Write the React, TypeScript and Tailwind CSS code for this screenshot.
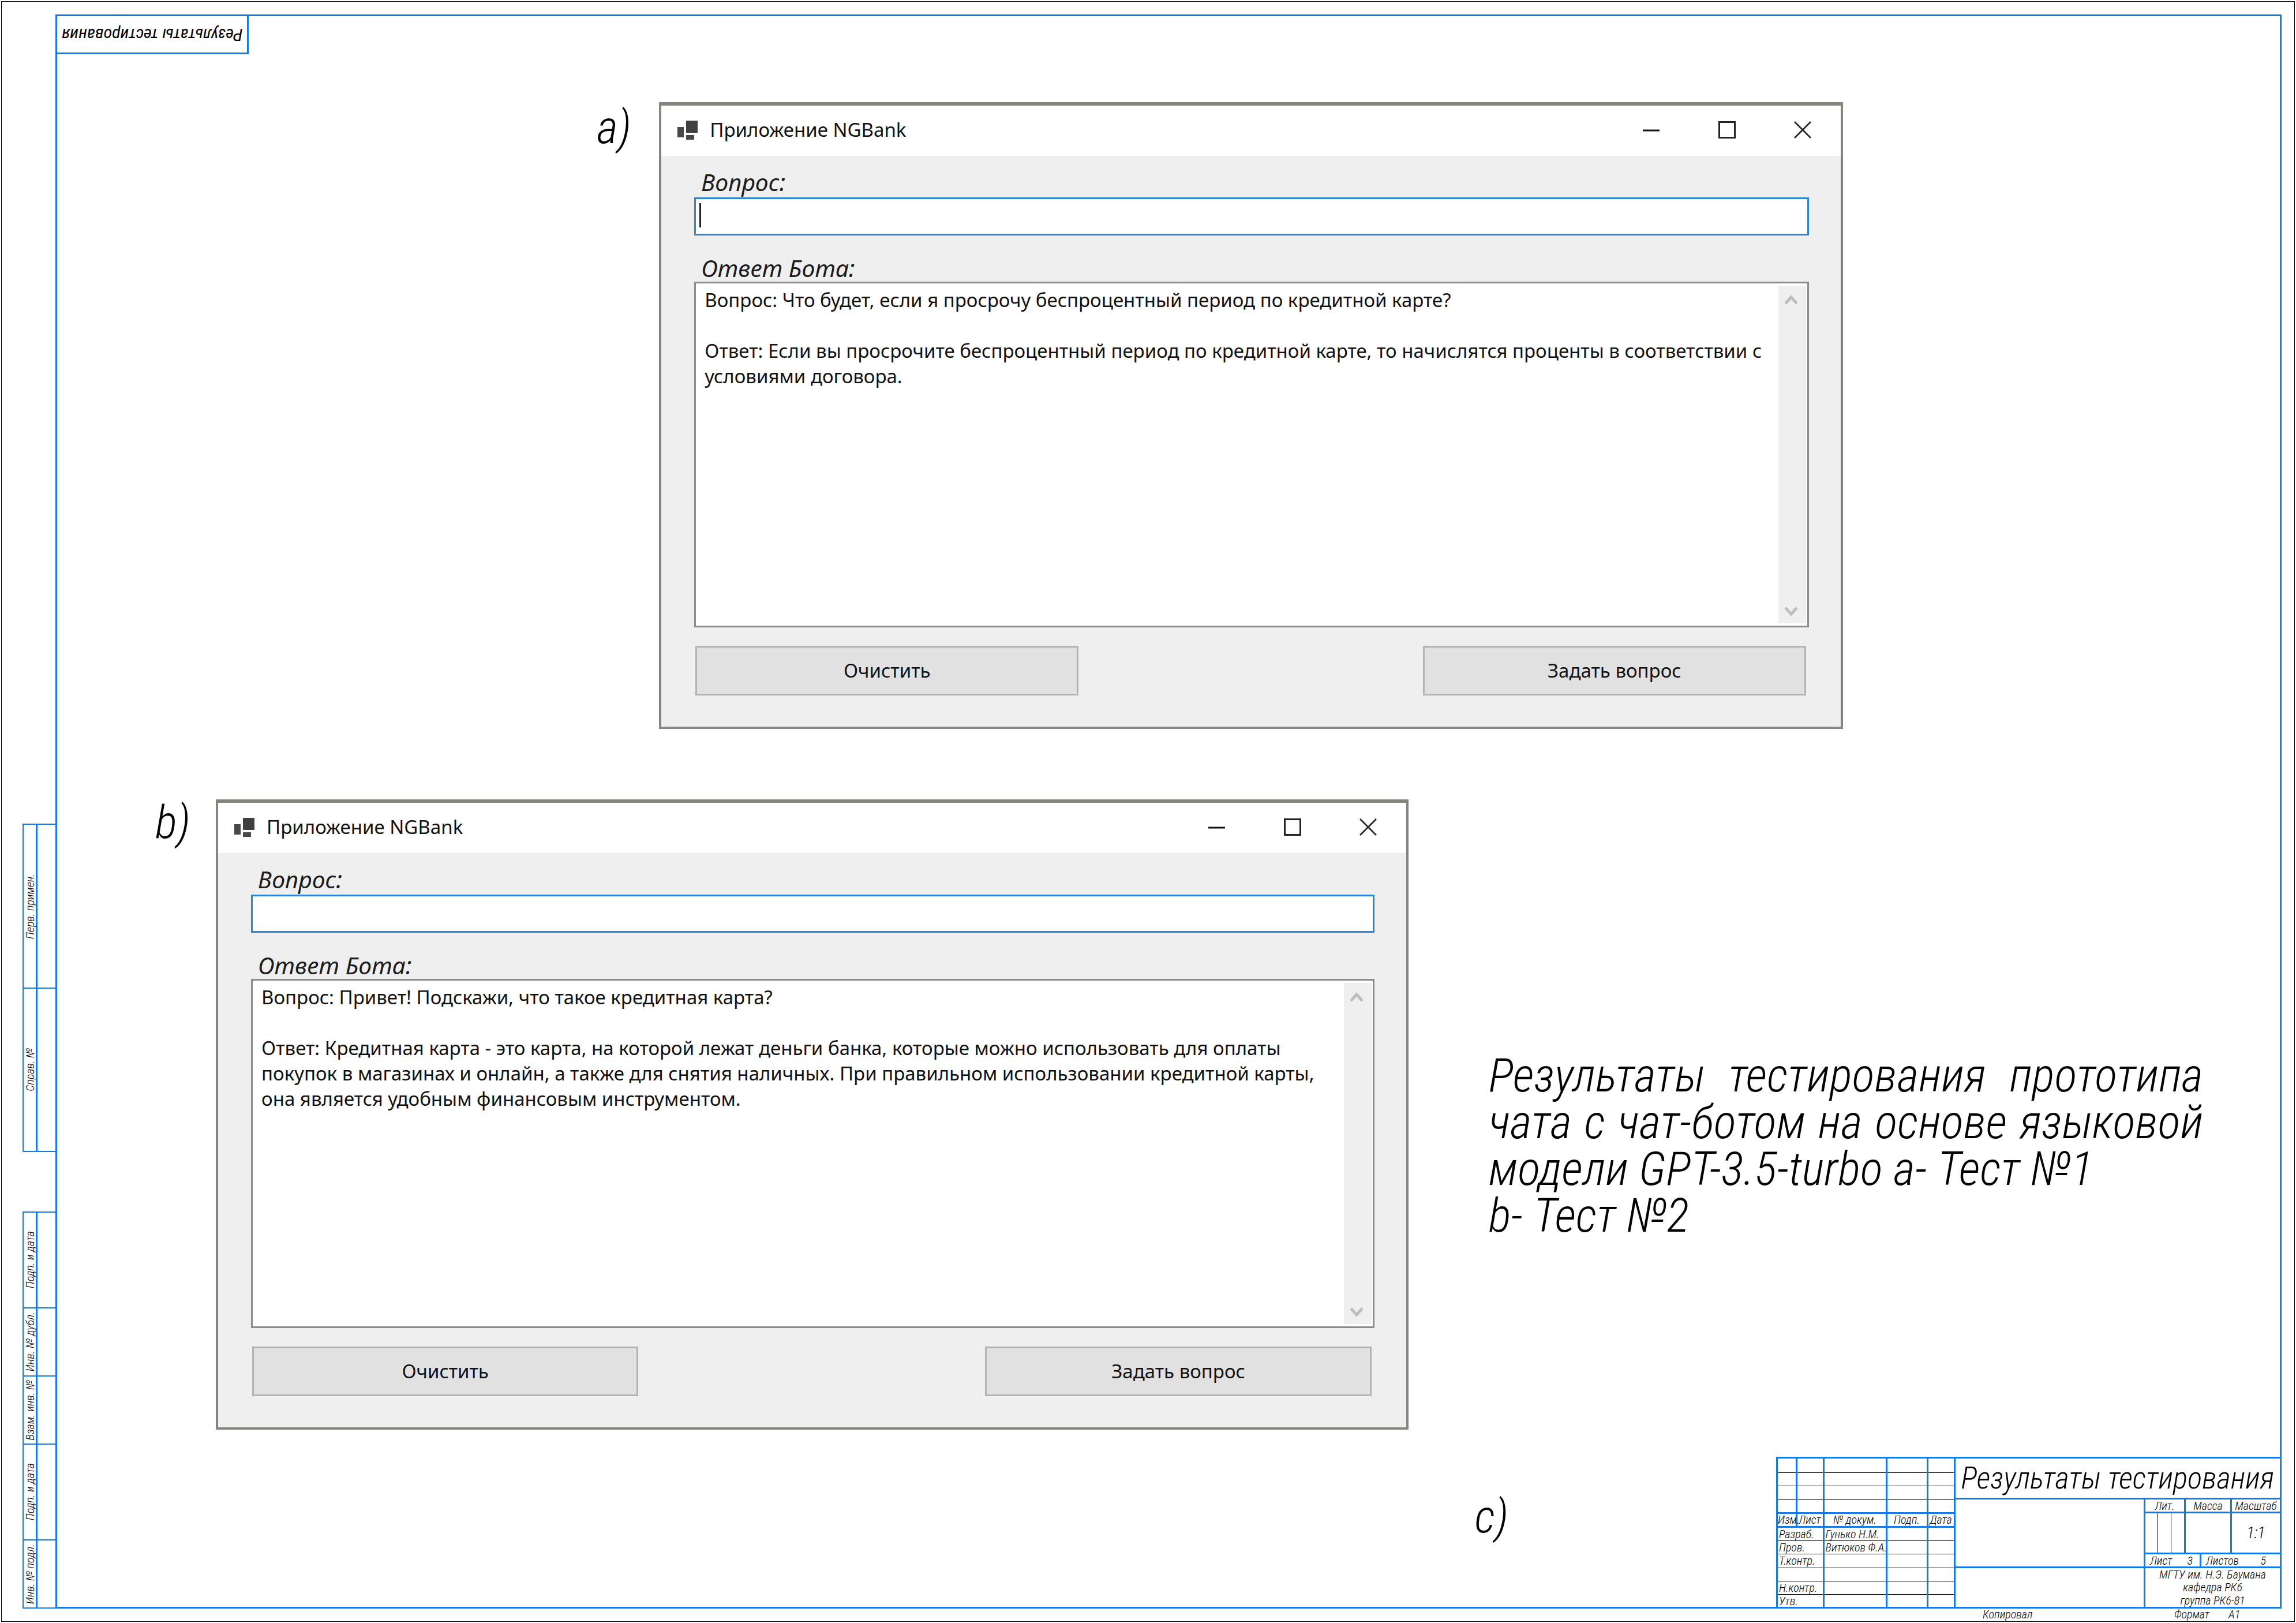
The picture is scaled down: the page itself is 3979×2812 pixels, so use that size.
import { useId } from "react";

type WindowProps = {
  text: string;
  boxClass: string;
  caret?: boolean;
};

const BLUE = "border-[#137be6]";

function AppIcon() {
  return (
    <svg viewBox="0 0 35 33" className="h-[33px] w-[35px]" aria-hidden="true">
      <rect x="0" y="11" width="11" height="18" fill="#484848" />
      <rect x="15" y="0" width="20" height="21" fill="#404040" />
      <rect x="15" y="25" width="14" height="8" fill="#484848" />
    </svg>
  );
}

function WindowControls() {
  const btn = "flex h-full w-[131px] items-center justify-center";
  return (
    <div className="flex h-full">
      <button type="button" aria-label="Свернуть" className={btn}>
        <svg viewBox="0 0 30 30" className="size-[30px]" stroke="#111" strokeWidth="3">
          <path d="M0 16H29" />
        </svg>
      </button>
      <button type="button" aria-label="Развернуть" className={btn}>
        <svg viewBox="0 0 30 30" className="size-[30px]" fill="none" stroke="#222" strokeWidth="3">
          <rect x="1.5" y="1.5" width="27" height="27" />
        </svg>
      </button>
      <button type="button" aria-label="Закрыть" className={btn}>
        <svg viewBox="0 0 30 30" className="size-[30px]" stroke="#222" strokeWidth="2.6">
          <path d="M1 1L29 29M29 1L1 29" />
        </svg>
      </button>
    </div>
  );
}

function ScrollBar() {
  return (
    <div className="my-1 mr-[2px] flex w-[48px] shrink-0 flex-col items-center justify-between bg-[#efefef] pt-4 pr-1 pb-3">
      <svg viewBox="0 0 22 18" className="h-[18px] w-[22px]" fill="none" stroke="#bdbdbd" strokeWidth="5">
        <path d="M1 15L11 4L21 15" />
      </svg>
      <svg viewBox="0 0 22 18" className="h-[18px] w-[22px]" fill="none" stroke="#bdbdbd" strokeWidth="5">
        <path d="M1 3L11 14L21 3" />
      </svg>
    </div>
  );
}

function BankWindow({ text, boxClass, caret }: WindowProps) {
  const id = useId();
  const label = "ml-3 block text-[41px] leading-[48px] text-[#1c1c1c] italic";
  const button =
    "h-[86px] w-[34.5%] border-[3px] border-[#b3b3b3] bg-[#e1e1e1] text-[33px] leading-[44px] text-[#111]";
  return (
    <section className="border-4 border-t-[6px] border-[#85847d] bg-[#efefef] font-['Noto_Sans',sans-serif]">
      <header className="flex h-[87px] items-center bg-white pb-[3px] pl-7">
        <AppIcon />
        <h2 className="ml-[21px] flex-1 text-[33px] leading-[44px] text-[#111]">Приложение NGBank</h2>
        <WindowControls />
      </header>
      <div className="pr-[55px] pb-[54px] pl-[57px]">
        <label htmlFor={`${id}-q`} className={`${label} pt-[21px]`}>
          Вопрос:
        </label>
        <div className="relative mt-[3px]">
          <input
            id={`${id}-q`}
            type="text"
            className="block h-[66px] w-full border-[3px] border-[#2d84d0] bg-white px-3 text-[33px] outline-none"
          />
          {caret && <span className="absolute top-[10px] left-[9px] h-[42px] w-[3px] bg-[#222]" />}
        </div>
        <label htmlFor={`${id}-a`} className={`${label} mt-8`}>
          Ответ Бота:
        </label>
        <div className={`flex border-[3px] border-[#8c8c8c] bg-white ${boxClass}`}>
          <textarea
            id={`${id}-a`}
            readOnly
            value={text}
            className="block flex-1 resize-none overflow-hidden bg-white px-[15px] pt-[7px] text-[33px] leading-[44px] text-[#111] outline-none"
          />
          <ScrollBar />
        </div>
        <div className="mt-8 mr-[5px] ml-[2px] flex justify-between">
          <button type="button" className={button}>
            Очистить
          </button>
          <button type="button" className={button}>
            Задать вопрос
          </button>
        </div>
      </div>
    </section>
  );
}

function StripGroup({ cells }: { cells: { label: string; size: string }[] }) {
  return (
    <div className={`border-t-2 border-l-2 ${BLUE}`}>
      {cells.map((c, i) => (
        <div key={i} className={`flex border-b-2 ${BLUE} ${c.size}`}>
          <div className={`flex w-6 items-center justify-center border-r-[3px] ${BLUE}`}>
            <span className="rotate-180 text-[20px] leading-[22px] whitespace-nowrap [text-orientation:sideways] [writing-mode:vertical-rl]">
              {c.label}
            </span>
          </div>
        </div>
      ))}
    </div>
  );
}

const EMPTY_ROWS = ["h-6", "h-[23px]", "h-6", "h-[23px]"];

const SIGN_ROWS: { role: string; name: string; size: string }[] = [
  { role: "Разраб.", name: "Гунько Н.М.", size: "h-6" },
  { role: "Пров.", name: "Витюков Ф.А.", size: "h-[23px]" },
  { role: "Т.контр.", name: "", size: "h-6" },
  { role: "", name: "", size: "h-[23px]" },
  { role: "Н.контр.", name: "", size: "h-[23px]" },
  { role: "Утв.", name: "", size: "h-[23px]" },
];

function RevisionTable() {
  const v = "border-r-[3px] border-r-[#137be6]";
  const thin = "border-b border-b-black";
  const thick = "border-b-[3px] border-b-[#137be6]";
  return (
    <table className="w-[306px] table-fixed border-collapse text-[20px] leading-5">
      <colgroup>
        <col className="w-[32px]" />
        <col className="w-[47px]" />
        <col className="w-[109px]" />
        <col className="w-[71px]" />
        <col className="w-[47px]" />
      </colgroup>
      <tbody>
        {EMPTY_ROWS.map((size, r) => (
          <tr key={r} className={size}>
            {[0, 1, 2, 3, 4].map((c) => (
              <td key={c} className={`p-0 ${v} ${r === EMPTY_ROWS.length - 1 ? thick : thin}`} />
            ))}
          </tr>
        ))}
        <tr className="h-6">
          {["Изм.", "Лист", "№ докум.", "Подп.", "Дата"].map((h) => (
            <th key={h} scope="col" className={`p-0 text-center font-light whitespace-nowrap ${v} ${thick}`}>
              {h}
            </th>
          ))}
        </tr>
        {SIGN_ROWS.map(({ role, name, size }, r) => {
          const b = r === SIGN_ROWS.length - 1 ? "" : thin;
          return (
            <tr key={r} className={size}>
              <td colSpan={2} className={`p-0 pl-[2px] ${v} ${b}`}>
                {role}
              </td>
              <td className={`p-0 pl-[2px] whitespace-nowrap ${v} ${b}`}>{name}</td>
              <td className={`p-0 ${v} ${b}`} />
              <td className={`p-0 ${v} ${b}`} />
            </tr>
          );
        })}
      </tbody>
    </table>
  );
}

function TitleBlock() {
  const cell = "flex items-center justify-center";
  return (
    <div
      className={`flex h-[260px] w-[873px] items-stretch border-t-[3px] border-l-[3px] text-[20px] leading-5 ${BLUE}`}
    >
      <RevisionTable />
      <div className="flex flex-1 flex-col">
        <div className={`${cell} h-[71px] border-b-[3px] ${BLUE}`}>
          <h1 className="text-[53px] leading-[60px] whitespace-nowrap">Результаты тестирования</h1>
        </div>
        <div className="flex flex-1">
          <div className="flex flex-1 flex-col">
            <div className={`h-[119px] border-b-[3px] ${BLUE}`} />
          </div>
          <div className={`flex w-[236px] flex-col border-l-[3px] ${BLUE}`}>
            <div className={`flex h-6 border-b-[3px] ${BLUE}`}>
              <div className={`${cell} w-[70px] border-r-[3px] ${BLUE}`}>Лит.</div>
              <div className={`${cell} w-20 border-r-[3px] ${BLUE}`}>Масса</div>
              <div className={`${cell} flex-1`}>Масштаб</div>
            </div>
            <div className={`flex h-[71px] border-b-[3px] ${BLUE}`}>
              <div className={`grid w-[70px] grid-cols-3 border-r-[3px] ${BLUE}`}>
                <div className="border-r border-black" />
                <div className="border-r border-black" />
              </div>
              <div className={`w-20 border-r-[3px] ${BLUE}`} />
              <div className={`${cell} flex-1 text-[28px]`}>1:1</div>
            </div>
            <div className={`flex h-6 border-b-[3px] ${BLUE}`}>
              <div className={`flex w-[97px] items-center justify-between border-r-[3px] pr-3 pl-2 ${BLUE}`}>
                <span>Лист</span>
                <span>3</span>
              </div>
              <div className="flex flex-1 items-center justify-between pr-6 pl-2">
                <span>Листов</span>
                <span>5</span>
              </div>
            </div>
            <div className="flex flex-1 flex-col items-center justify-around">
              <span>МГТУ им. Н.Э. Баумана</span>
              <span>кафедра РК6</span>
              <span>группа РК6-81</span>
            </div>
          </div>
        </div>
      </div>
    </div>
  );
}

const TEXT_A =
  "Вопрос: Что будет, если я просрочу беспроцентный период по кредитной карте?\n\nОтвет: Если вы просрочите беспроцентный период по кредитной карте, то начислятся проценты в соответствии с условиями договора.";

const TEXT_B =
  "Вопрос: Привет! Подскажи, что такое кредитная карта?\n\nОтвет: Кредитная карта - это карта, на которой лежат деньги банка, которые можно использовать для оплаты покупок в магазинах и онлайн, а также для снятия наличных. При правильном использовании кредитной карты, она является удобным финансовым инструментом.";

export default function App() {
  const mark = "text-[80px] leading-[80px]";
  return (
    <div className="flex min-h-screen bg-white p-[2px] font-['Roboto_Condensed','Roboto',sans-serif] font-light text-black">
      <div className="flex flex-1 flex-col border border-black pt-[22px] italic">
        <div className="flex flex-1 pr-[22px] pl-9">
          <aside className="flex w-[57px] flex-col justify-end gap-[103px]">
            <StripGroup
              cells={[
                { label: "Перв. примен.", size: "h-[284px]" },
                { label: "Справ. №", size: "h-[283px]" },
              ]}
            />
            <StripGroup
              cells={[
                { label: "Подп. и дата", size: "h-[166px]" },
                { label: "Инв. № дубл.", size: "h-[118px]" },
                { label: "Взам. инв. №", size: "h-[118px]" },
                { label: "Подп. и дата", size: "h-[166px]" },
                { label: "Инв. № подл.", size: "h-[118px]" },
              ]}
            />
          </aside>

          <main className={`flex flex-1 flex-col border-[3px] ${BLUE}`}>
            <div className={`flex h-[66px] w-[332px] items-center justify-center border-r-[3px] border-b-[3px] ${BLUE}`}>
              <span className="rotate-180 text-[30px] leading-[36px] font-normal whitespace-nowrap">
                Результаты тестирования
              </span>
            </div>

            <div className="mt-[83px] grid grid-cols-[935fr_108fr_2051fr_757fr] items-start">
              <span className={`${mark} col-start-2 mt-1`}>a)</span>
              <div className="font-normal not-italic">
                <BankWindow text={TEXT_A} boxClass="h-[599px]" caret />
              </div>
            </div>

            <div className="mt-[122px] grid grid-cols-[170fr_105fr_2066fr_139fr_minmax(0,1238fr)_133fr] items-start">
              <span className={`${mark} col-start-2`}>b)</span>
              <div className="font-normal not-italic">
                <BankWindow text={TEXT_B} boxClass="h-[605px]" />
              </div>
              <p className="col-start-5 mt-[438px] text-[82px] leading-[81px] whitespace-nowrap">
                <span className="block [text-align-last:justify]">Результаты тестирования прототипа</span>
                <span className="block [text-align-last:justify]">чата с чат-ботом на основе языковой</span>
                <span className="block">модели GPT-3.5-turbo a- Тест №1</span>
                <span className="block">b- Тест №2</span>
              </p>
            </div>

            <div className="mt-auto flex items-start justify-end gap-[464px]">
              <span className={`${mark} mt-16`}>c)</span>
              <TitleBlock />
            </div>
          </main>
        </div>

        <footer className="flex h-[22px] justify-end pr-[22px] text-[20px] leading-5">
          <div className="grid w-[876px] grid-cols-[358px_332px_94px_1fr]">
            <span className="col-start-2">Копировал</span>
            <span>Формат</span>
            <span>A1</span>
          </div>
        </footer>
      </div>
    </div>
  );
}
